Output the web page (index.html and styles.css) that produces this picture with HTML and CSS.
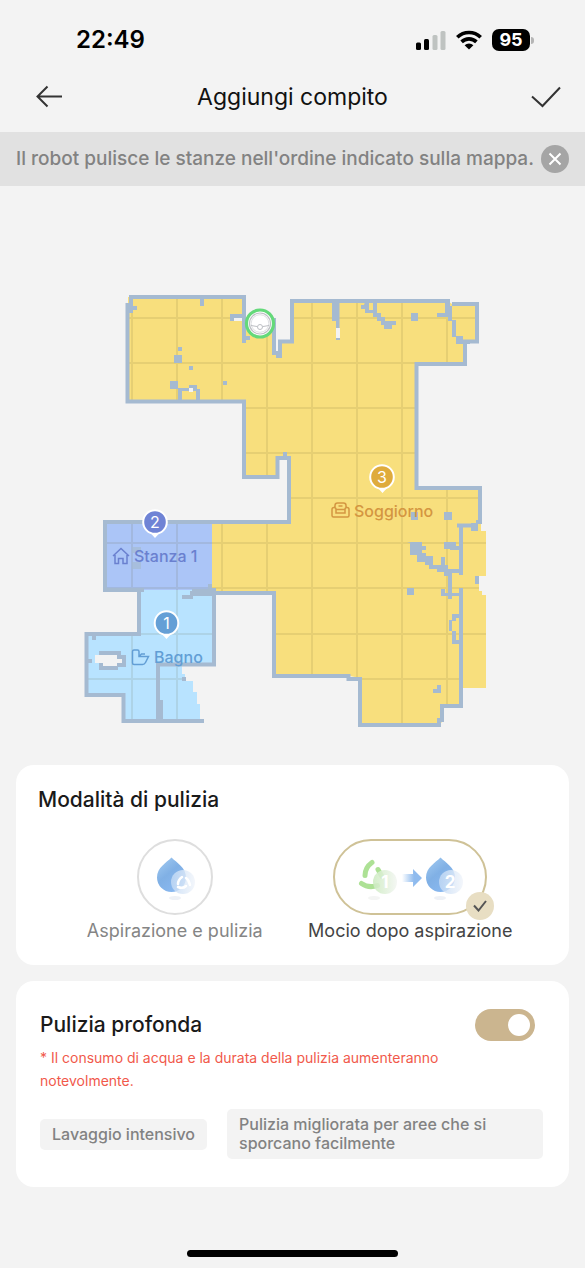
FILE: index.html
```html
<!DOCTYPE html>
<html lang="it">
<head>
<meta charset="utf-8">
<meta name="viewport" content="width=device-width, initial-scale=1">
<title>Aggiungi compito</title>
<link rel="stylesheet" href="styles.css">
</head>
<body>
<div class="status">
  <span class="status-time">22:49</span>
  <div class="status-icons">
    <svg class="signal" viewBox="0 0 30 20" aria-hidden="true">
      <rect x="0" y="12.500" width="5" height="7.500" rx="1.500"/>
      <rect x="8" y="9" width="5" height="11" rx="1.500"/>
      <rect x="16.500" y="5" width="5" height="15" rx="1.500" fill="#bfc3c1"/>
      <rect x="24.500" y="1" width="5" height="19" rx="1.500" fill="#bfc3c1"/>
    </svg>
    <svg class="wifi" viewBox="0 0 26 20" aria-hidden="true">
      <g fill="none" stroke="#000" stroke-width="3.600">
        <path d="M1.300 7.300A16.800 16.800 0 0 1 24.700 7.300"/>
        <path d="M5.600 11.900A10.600 10.600 0 0 1 20.400 11.900"/>
      </g>
      <path d="M8.600 15.200a6.300 6.300 0 0 1 8.800 0L13 19.600z"/>
    </svg>
    <div class="battery"><span class="battery-level">95</span><span class="battery-tip"></span></div>
  </div>
</div>

<header class="header">
  <button class="icon-btn" aria-label="Indietro">
    <svg width="28" height="24" viewBox="0 0 28 24"><path d="M26 11.500H2M11.500 1.500L1.500 11.500 11.500 21.500"/></svg>
  </button>
  <h1 class="title">Aggiungi compito</h1>
  <button class="icon-btn icon-btn-end" aria-label="Conferma">
    <svg width="30" height="22" viewBox="0 0 30 22"><path d="M1 10.500l10.500 9.500L29 1.500"/></svg>
  </button>
</header>

<div class="notice">
  <p class="notice-text">Il robot pulisce le stanze nell'ordine indicato sulla mappa.</p>
  <button class="notice-close" aria-label="Chiudi">
    <svg width="14" height="14" viewBox="0 0 14 14"><path d="M1.500 1.500l11 11M12.500 1.500l-11 11"/></svg>
  </button>
</div>

<main>
  <svg class="map" viewBox="0 186 585 579" role="img" aria-label="Mappa">
    <defs>
      <clipPath id="floor">
        <path d="M128 297H246V330H273V353L282 357V342H292V301H448L452 304H478V342H466V364H417V488H481V531H486V576H479V591H482V595H486V688H462V706H443V721L439 725H360V678L350 676H275V593H215V665H182V674H185V681H193V692H197V704H200V721H124V695H87V635H139V591H105V522H290V458H278V477H244V402H128z"/>
      </clipPath>
    </defs>
    <g clip-path="url(#floor)">
      <path class="room-living" d="M100 280H500V740H275V593H212V522H120z"/>
      <path class="room-one" d="M103 520H212V590H103z"/>
      <path class="room-bath" d="M80 590H215V730H80z"/>
      <path class="grid" d="M132 280V730M177 280V730M222 280V730M267 280V730M312 280V730M357 280V730M402 280V730M447 280V730M80 318H490M80 363H490M80 408H490M80 453H490M80 498H490M80 543H490M80 588H490M80 634H490M80 679H462"/>
    </g>
    <!-- outer walls -->
    <g class="wall">
      <path d="M244 343V297H131V305M127.500 303V401.500H244V477H277.500V458H289V524"/>
      <path d="M274 318V353H280V341.500H292V301H448V312M452 304H477V341.500H458M465 341V364H416.500V488H480V522H476M457 525.500H476"/>
      <path d="M461 525V575M461 588V706H442V720H439V725H360V679H348.500V676H274V593H190M214 588V664.500H158V721"/>
      <path d="M291 522H105V590H144M139 589V634H86.500V695H123.500V721H204"/>
    </g>
    <!-- inner obstacles -->
    <g class="block">
      <path d="M200 299h4v7h-4zM230 314h14v4h-10v3h-4zM244 336h6v4h-6zM129 303h4v3h4v4h-4v3h-5zM178 347h4v4h-4zM174 355h8v8h-8zM189 366h4v4h-4zM223 381h4v4h-4zM170 381h8v8h-8z"/>
      <path d="M178 388h11v-3h8v4h3v12h-4v-10h-14v10h-4zM283 452h4v6h-4zM276 352h6v6h-6z"/>
      <path d="M332 302h7.500v26h-3.500v-7h-4zM336 337h4v3h-4zM365 302h4v8h4v-8h4v11h4v4h4v4h11v4h-4v4h-8v-4h-3v-4h-4v-4h-4v-4h-8v-4h-4v-4h3zM411 313h7v8h-7zM437 313h8v-10h3v3h4v14h4v16h7v5h7v3h-14v-7h-4v-16h-4v-4h-11z"/>
      <path d="M411 512h7v8h-7zM444 512h8v8h-8zM471 523h7v8h-7zM444 542h12v4h5v4h-11v-1h-6zM475 576h4v8h-4zM407 588h7v7h-7z"/>
      <path d="M411 542h11v4h4v4h-4v3h4v3h7v9h8v-8h4v8h3v4h13v4h-9v20h9v3h-9v3h-4v-3h-7v-7h4v4h3v-17h-4v-4h-7v-3h-8v-4h-4v-3h-8v-7h-7v-12h-3z"/>
      <path d="M452 614h9v4h-5v3h-4v10h4v9h5v4h-9v-13h-3v-11h3zM437 685h4v8h-8v-4h4z"/>
      <path d="M208 584h4v4h4v8h-23v3h-11v-4h10v-6h16zM156 700h7v20h-7zM182 677h4v4h-4zM92 636h4v4h-4zM87 659h5v4h-5z"/>
      <path d="M99 651h22v4h5v12h-8v3h-19z"/>
      <path d="M132 547h9v6h-9zM132 562h9v7h-9z" opacity=".7"/>
    </g>
    <!-- uncovered cells -->
    <path class="void" d="M234 318h8v3h-8zM336 328h4v10h-4zM189 388h4v4h-4zM95 655h22v4h5v4h-5v3h-14v-3h-8z"/>
    <!-- dock -->
    <g fill="none" stroke="#bdbfc4">
      <circle cx="260" cy="323.500" r="13.500" fill="#fff" stroke="#64d97a" stroke-width="3.200"/>
      <circle cx="260" cy="323.500" r="10.500" stroke-width="1.200"/>
      <circle cx="260" cy="323.500" r="8.800" stroke="#d5d7da" stroke-width=".8"/>
      <path d="M251 325.500l6 1M269 325.500l-6 1"/>
      <circle cx="260" cy="327" r="2.500" fill="#fff"/>
    </g>
    <!-- pins -->
    <g class="pin">
      <path d="M377 487h11l-5.500 6zM149.500 532h11l-5.500 6zM161 633h11l-5.500 6z" fill="#fff"/>
      <circle cx="382" cy="477" r="11.800" fill="#dfab3c"/><text x="382" y="482.500">3</text>
      <circle cx="155" cy="522" r="11.800" fill="#6f83d5"/><text x="155" y="527.500">2</text>
      <circle cx="166.500" cy="623" r="11.800" fill="#649fd6"/><text x="166.500" y="628.500">1</text>
    </g>
    <g class="room-label label-living">
      <path d="M335 508v-2.500q0-2.500 2.500-2.500h6q2.500 0 2.500 2.500v2.500M332 509.500q0-2 2-2t2 2v3.500h9v-3.500q0-2 2-2t2 2v6q0 1.500-1.500 1.500h-14q-1.500 0-1.500-1.500zM336.500 509.500h8M338.500 506h4"/>
      <text x="354" y="516.500">Soggiorno</text>
    </g>
    <g class="room-label label-one">
      <path d="M113 556l8-7.500 8 7.500M115 555v8.500h3.500v-5h4.500v5h4V555"/>
      <text x="134" y="561.500">Stanza 1</text>
    </g>
    <g class="room-label label-bath">
      <path d="M132.500 651.500q0-1.500 1.500-1.500h3.500q1.500 0 1.500 1.500v5h9.500l-3 6q-1 2-3 2h-8.500q-1.500 0-1.500-1.500zM139 656.500l2.500-2.500h3.500"/>
      <text x="154" y="663">Bagno</text>
    </g>
  </svg>

  <section class="card mode-card">
    <h2 class="card-title">Modalità di pulizia</h2>
    <div class="modes">
      <label class="mode">
        <span class="mode-frame mode-round">
          <input class="mode-input" type="radio" name="mode">
          <svg width="72" height="72" viewBox="0 0 72 72" aria-hidden="true">
            <defs>
              <linearGradient id="drop" x1="0" y1="0" x2=".7" y2="1"><stop offset="0" stop-color="#a5cdf2"/><stop offset=".5" stop-color="#80b0e5"/><stop offset="1" stop-color="#8ab9f1"/></linearGradient>
              <linearGradient id="disc"><stop offset="0" stop-color="#c3daf5"/><stop offset="1" stop-color="#f0f4fa"/></linearGradient>
              <linearGradient id="disc-green"><stop offset="0" stop-color="#cdebc1"/><stop offset="1" stop-color="#f3f6f2"/></linearGradient>
            </defs>
            <ellipse cx="36" cy="57" rx="6" ry="2" fill="#eef1f6"/>
            <path d="M32.500 16.500c5 5 14.500 10 14.500 20a14.500 14.500 0 0 1-29 0c0-10 9.500-15 14.500-20z" fill="url(#drop)"/>
            <circle cx="44" cy="41" r="12" fill="url(#disc)" opacity=".8"/>
            <g fill="none" stroke="#fff" stroke-width="2.500" stroke-linecap="round"><path d="M43 36q-4 3-4 7M39 46q5 2 8-1M47 37q3 2 4 7"/></g>
          </svg>
        </span>
        <span class="mode-name">Aspirazione e pulizia</span>
      </label>
      <label class="mode">
        <span class="mode-frame mode-wide">
          <input class="mode-input" type="radio" name="mode" checked>
          <svg width="150" height="72" viewBox="0 0 150 72" aria-hidden="true">
            <defs>
              <linearGradient id="flow"><stop offset="0" stop-color="#8fbbee" stop-opacity="0"/><stop offset=".6" stop-color="#8fbbee"/></linearGradient>
            </defs>
            <ellipse cx="39" cy="57" rx="6" ry="2" fill="#f4f5f4"/>
            <ellipse cx="105" cy="57" rx="6" ry="2" fill="#eef1f6"/>
            <g fill="none" stroke="#ade195" stroke-width="5" stroke-linecap="round">
              <path d="M37 21.500q-7 5-7 13M26.500 42.500q7 5 16 2M43 28.500l4 7"/>
            </g>
            <circle cx="50" cy="41" r="12" fill="url(#disc-green)" opacity=".88"/>
            <text class="step" x="50" y="47">1</text>
            <path d="M67 33h11v-5l9 9-9 9v-5H67z" fill="url(#flow)"/>
            <path d="M105.500 16.500c5 5 14.500 10 14.500 20a14.500 14.500 0 0 1-29 0c0-10 9.500-15 14.500-20z" fill="url(#drop)"/>
            <circle cx="116" cy="41" r="12" fill="url(#disc)" opacity=".8"/>
            <text class="step" x="115" y="47">2</text>
          </svg>
          <span class="badge">
            <svg width="14" height="12" viewBox="0 0 14 12" aria-hidden="true"><path d="M1 5.500L5.500 10.500 13 1"/></svg>
          </span>
        </span>
        <span class="mode-name mode-name-on">Mocio dopo aspirazione</span>
      </label>
    </div>
  </section>

  <section class="card deep-card">
    <div class="deep-head">
      <label class="card-title" for="deep">Pulizia profonda</label>
      <input class="switch" id="deep" type="checkbox" role="switch" checked>
    </div>
    <p class="warning">* Il consumo di acqua e la durata della pulizia aumenteranno notevolmente.</p>
    <div class="chips">
      <span class="chip">Lavaggio intensivo</span>
      <span class="chip chip-grow">Pulizia migliorata per aree che si sporcano facilmente</span>
    </div>
  </section>
</main>
<div class="home-bar"></div>
</body>
</html>
```

FILE: styles.css
```css
* { box-sizing: border-box; }
body {
  margin: 0;
  background: #f3f3f3;
  color: #1a1a1a;
  font-family: Inter, "Liberation Sans", sans-serif;
}
h1, h2, p { margin: 0; }
button { border: 0; padding: 0; background: none; }
svg { display: block; }

.status {
  display: flex;
  justify-content: space-between;
  align-items: center;
  height: 62px;
  padding: 18px 51px 0 76px;
  color: #000;
}
.status-time { font-size: 24px; line-height: 28px; font-weight: 600; }
.status-icons { display: flex; align-items: center; gap: 10px; }
.signal { width: 30px; height: 20px; }
.wifi { width: 26px; height: 20px; }
.battery { display: flex; align-items: center; gap: 1px; }
.battery-level {
  width: 38px;
  border-radius: 7px;
  background: #000;
  color: #fff;
  font-size: 18px;
  line-height: 22px;
  font-weight: 700;
  text-align: center;
}
.battery-tip { width: 3px; height: 7px; border-radius: 0 3px 3px 0; background: #b5b5b5; }

.header {
  display: grid;
  grid-template-columns: 1fr auto 1fr;
  align-items: center;
  height: 70px;
  padding: 0 24px 0 36px;
}
.header { padding: 0 24px; }
.icon-btn { justify-self: start; padding-left: 12px; }
.icon-btn-end { justify-self: end; padding-left: 0; }
.icon-btn svg { fill: none; stroke: #333; stroke-width: 2; }
.title { font-size: 23px; line-height: 32px; font-weight: 400; color: #111; }

.notice {
  display: flex;
  justify-content: space-between;
  align-items: center;
  height: 54px;
  padding: 0 16px;
  background: #e1e1e1;
}
.notice-text { font-size: 19px; line-height: 24px; font-weight: 500; color: #828282; }
.notice-close {
  display: grid;
  flex: none;
  place-items: center;
  width: 28px;
  height: 28px;
  border-radius: 50%;
  background: #a5a5a5;
}
.notice-close svg { stroke: #fff; stroke-width: 2; }

.map { width: 100%; height: auto; }
.room-living { fill: #f8df7d; }
.room-one { fill: #abc5f7; }
.room-bath { fill: #b8e3ff; }
.grid { fill: none; stroke: #5a5020; stroke-opacity: .11; stroke-width: 2; }
.void { fill: #f3f3f3; }
.wall { fill: none; stroke: #a5bad1; stroke-width: 4; }
.block { fill: #a5bad1; }
.pin circle { stroke: #fff; stroke-width: 2; }
.pin text { fill: #fff; font-size: 16px; text-anchor: middle; }
.room-label path { fill: none; stroke: currentColor; stroke-width: 1.5; }
.room-label text { fill: currentColor; font-size: 16px; font-weight: 500; }
.label-living { color: #d49641; }
.label-one { color: #6a80cf; }
.label-bath { color: #629ed5; }

.card { margin: 0 16px 16px; border-radius: 18px; background: #fff; }
.card-title { font-size: 21px; line-height: 28px; font-weight: 500; }
.mode-card { height: 200px; padding: 21px 22px 0; }
.modes { display: grid; grid-template-columns: 1fr 1fr; padding: 25px 19px 0; }
.mode { display: flex; flex-direction: column; align-items: center; gap: 3px; }
.mode-frame { position: relative; border: 2px solid #dedede; border-radius: 38px; }
.mode-wide { border-color: #cfc297; }
.mode-input { position: absolute; inset: 0; margin: 0; width: 100%; height: 100%; opacity: 0; }
.mode-name { font-size: 18px; line-height: 26px; color: #858585; white-space: nowrap; }
.mode-name-on { color: #444; }
.step { fill: #fff; font-size: 17px; font-weight: 700; text-anchor: middle; }
.badge {
  position: absolute;
  right: -9px;
  bottom: -7px;
  display: grid;
  place-items: center;
  width: 28px;
  height: 28px;
  border-radius: 50%;
  background: #e8dec3;
}
.badge svg { fill: none; stroke: #555; stroke-width: 2; }

.deep-card { padding: 28px 26px 28px 24px; }
.deep-head { display: flex; justify-content: space-between; align-items: center; padding-right: 8px; }
.switch {
  appearance: none;
  display: flex;
  justify-content: flex-end;
  align-items: center;
  width: 60px;
  height: 32px;
  margin: 0;
  padding: 0 5px;
  border-radius: 16px;
  background: #cbb58f;
}
.switch::before { content: ""; width: 22px; height: 22px; border-radius: 50%; background: #fff; }
.warning { padding: 5px 80px 0 0; font-size: 14px; line-height: 23px; color: #f1594b; }
.chips { display: flex; align-items: center; gap: 20px; padding-top: 17px; }
.chip {
  padding: 6px 12px;
  border-radius: 5px;
  background: #f3f3f3;
  color: #828282;
  font-size: 16px;
  line-height: 19px;
  font-weight: 500;
  white-space: nowrap;
}
.chip-grow { flex: 1; white-space: normal; }
.home-bar { width: 36%; height: 7px; margin: 63px auto 0; border-radius: 4px; background: #000; }
```
